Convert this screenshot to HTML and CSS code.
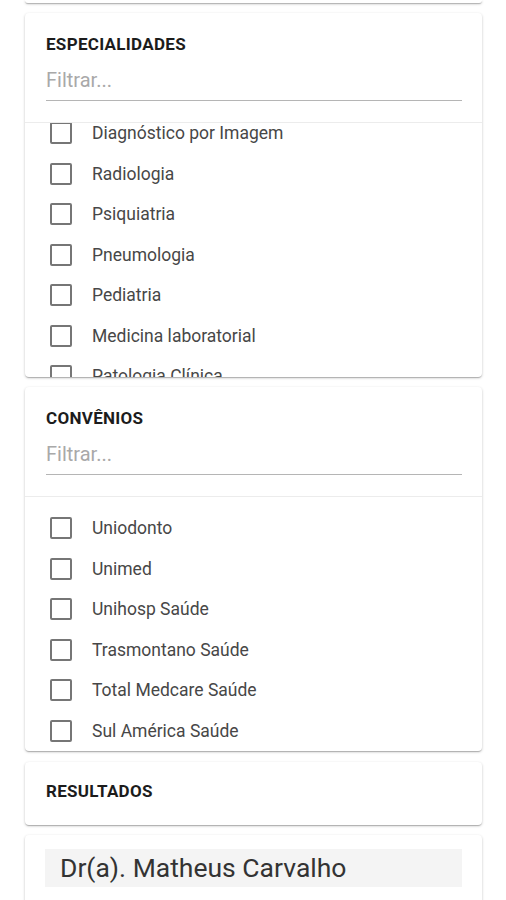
FILE: index.html
```html
<!DOCTYPE html>
<html lang="pt-BR">
<head>
<meta charset="utf-8">
<title>Busca</title>
<link rel="stylesheet" href="styles.css">
<script src="script.js" defer></script>
</head>
<body>
<main class="page">
  <section class="card stub"></section>

  <section class="card">
    <div class="filter-head">
      <h2 class="title">Especialidades</h2>
      <input class="filter-input" type="text" placeholder="Filtrar...">
    </div>
    <div class="list" data-scroll="21">
      <ul class="options">
        <li class="option"><span class="box"></span><span>Diagnóstico por Imagem</span></li>
        <li class="option"><span class="box"></span><span>Radiologia</span></li>
        <li class="option"><span class="box"></span><span>Psiquiatria</span></li>
        <li class="option"><span class="box"></span><span>Pneumologia</span></li>
        <li class="option"><span class="box"></span><span>Pediatria</span></li>
        <li class="option"><span class="box"></span><span>Medicina laboratorial</span></li>
        <li class="option"><span class="box"></span><span>Patologia Clínica</span></li>
      </ul>
    </div>
  </section>

  <section class="card">
    <div class="filter-head">
      <h2 class="title">Convênios</h2>
      <input class="filter-input" type="text" placeholder="Filtrar...">
    </div>
    <div class="list">
      <ul class="options">
        <li class="option"><span class="box"></span><span>Uniodonto</span></li>
        <li class="option"><span class="box"></span><span>Unimed</span></li>
        <li class="option"><span class="box"></span><span>Unihosp Saúde</span></li>
        <li class="option"><span class="box"></span><span>Trasmontano Saúde</span></li>
        <li class="option"><span class="box"></span><span>Total Medcare Saúde</span></li>
        <li class="option"><span class="box"></span><span>Sul América Saúde</span></li>
      </ul>
    </div>
  </section>

  <section class="card results">
    <h2 class="title">Resultados</h2>
  </section>

  <section class="card doctor">
    <h3 class="doctor-name">Dr(a). Matheus Carvalho</h3>
  </section>
</main>
</body>
</html>
```

FILE: styles.css
```css
html, body {
  margin: 0;
  padding: 0;
  background: #ffffff;
  font-family: Roboto, "Noto Sans", "Liberation Sans", sans-serif;
  color: #212121;
}

.page {
  padding: 0 24px 0 25px;
}

.card {
  background: #fff;
  border-radius: 4px;
  box-shadow: 0 1px 3px rgba(0,0,0,0.20), 0 1px 1px rgba(0,0,0,0.12), 0 2px 1px -1px rgba(0,0,0,0.10);
  margin-bottom: 10px;
  overflow: hidden;
}

.stub {
  height: 3px;
  border-top-left-radius: 0;
  border-top-right-radius: 0;
}

.filter-head {
  padding: 20px 20px 21px 21px;
  border-bottom: 1px solid #ececec;
}

.title {
  margin: 0;
  font-size: 17px;
  line-height: 22px;
  font-weight: 700;
  text-transform: uppercase;
  color: #1c1c1c;
  letter-spacing: 0.3px;
}

.filter-input {
  display: block;
  box-sizing: border-box;
  width: 100%;
  height: 41px;
  margin-top: 5px;
  padding: 0;
  border: 0;
  border-bottom: 1px solid #b5b5b5;
  font-family: inherit;
  font-size: 20px;
  color: #333;
  background: transparent;
  outline: none;
}

.filter-input::placeholder {
  color: #a9a9a9;
}

.list {
  height: 254px;
  overflow: hidden;
}

.options {
  list-style: none;
  margin: 0;
  padding: 11px 0 0 0;
}

.option {
  display: flex;
  align-items: center;
  height: 40.5px;
  padding-left: 25px;
  font-size: 17.5px;
  color: #474747;
  white-space: nowrap;
}

.box {
  box-sizing: border-box;
  width: 22px;
  height: 22px;
  border: 2px solid #767676;
  border-radius: 2px;
  margin-right: 20px;
  flex: none;
}

.results {
  height: 63px;
  padding: 18px 21px 0;
  box-sizing: border-box;
  margin-top: 11px;
}

.doctor {
  padding: 14px 20px 20px;
  border-bottom-left-radius: 0;
  border-bottom-right-radius: 0;
}

.doctor-name {
  margin: 0;
  background: #f4f4f4;
  height: 38px;
  line-height: 38px;
  padding-left: 15px;
  font-size: 26.5px;
  font-weight: 400;
  color: #333;
  white-space: nowrap;
}
```

FILE: script.js
```js
document.querySelectorAll('[data-scroll]').forEach(function (el) {
  el.scrollTop = parseInt(el.getAttribute('data-scroll'), 10);
});
```
